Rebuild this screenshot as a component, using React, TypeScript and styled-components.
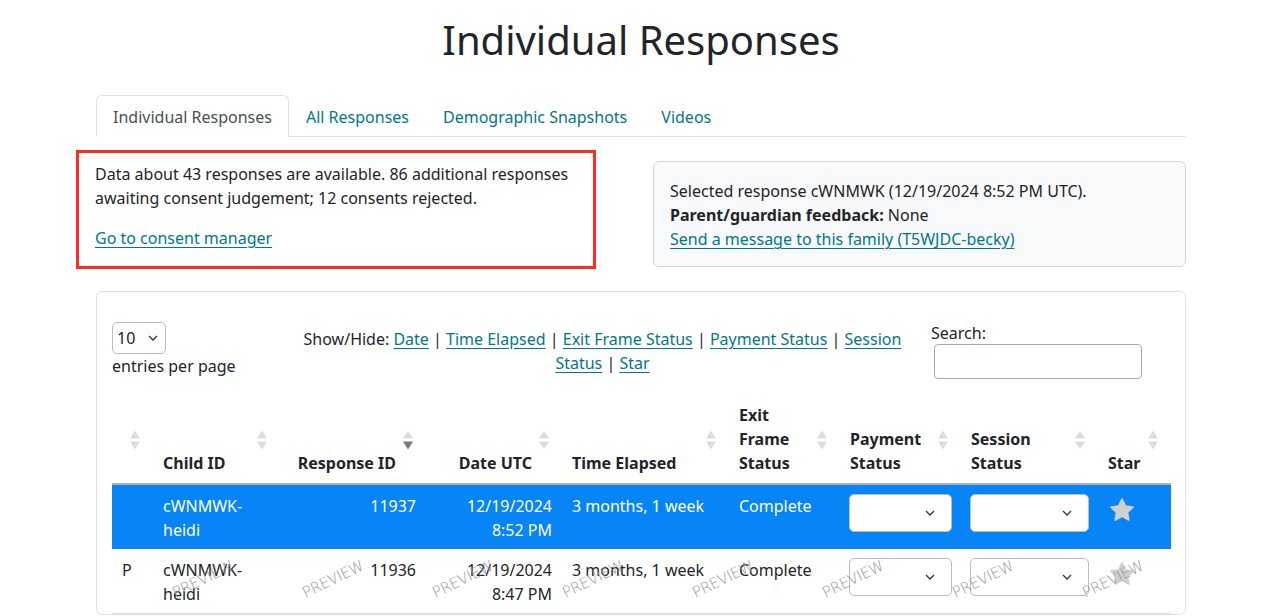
import React from "react";
import styled, { createGlobalStyle, css } from "styled-components";

const GlobalStyle = createGlobalStyle`
  html, body { margin: 0; padding: 0; background: #fff; }
  body {
    font-family: "Noto Sans", "Open Sans", sans-serif;
    font-size: 16px;
    line-height: 24px;
    color: #212529;
  }
  * { box-sizing: border-box; }
`;

const LINK = "#00788a";

const Page = styled.div`
  width: 1090px;
  margin-left: calc(50% - 547px);
`;

const Title = styled.h1`
  margin: 16px 0 31px;
  font-size: 40px;
  line-height: 48px;
  font-weight: 400;
  text-align: center;
`;

const TabBar = styled.nav`
  display: flex;
  border-bottom: 1px solid #dee2e6;
`;

const Tab = styled.a<{ $active?: boolean }>`
  display: block;
  padding: 9px 16px 7px 16px;
  margin-bottom: -1px;
  border: 1px solid transparent;
  border-top-left-radius: 6px;
  border-top-right-radius: 6px;
  color: ${(p) => (p.$active ? "#495057" : LINK)};
  text-decoration: none;
  cursor: pointer;
  ${(p) =>
    p.$active &&
    css`
      border-color: #dee2e6 #dee2e6 #fff;
      background: #fff;
    `}
`;

const InfoRow = styled.div`
  display: grid;
  grid-template-columns: 1fr 533px;
  align-items: start;
`;

const Highlight = styled.div`
  margin: 13px 0 0 -20px;
  width: 520px;
  border: 3px solid #fe2b1f;
  padding: 9px 16px 16px 16px;
`;

const Para = styled.p<{ $gap?: boolean }>`
  margin: 0 0 ${(p) => (p.$gap ? "16px" : "0")};
`;

const Link = styled.a`
  color: ${LINK};
  text-decoration: underline;
  text-underline-offset: 3px;
  cursor: pointer;
`;

const InfoCard = styled.div`
  margin-top: 24px;
  padding: 17px 16px 15px;
  background: #f8f9fa;
  border: 1px solid #d3d6d9;
  border-radius: 6px;
`;

const Line = styled.div``;

const Card = styled.div`
  margin-top: 22px;
  border: 1px solid #dee2e6;
  border-radius: 6px;
  padding: 29px 14px 0 15px;
`;

const Controls = styled.div`
  display: grid;
  grid-template-columns: 162px 637px 1fr;
  column-gap: 10px;
  align-items: start;
`;

const LengthCol = styled.div`
  display: flex;
  flex-direction: column;
  align-items: flex-start;
  padding-top: 1px;
`;

const SelectBox = styled.div<{ $w?: string; $h: number; $pad?: number }>`
  position: relative;
  width: ${(p) => p.$w ?? "100%"};
  height: ${(p) => p.$h}px;
  background: #fff;
  border: 1px solid #b9bcc0;
  border-radius: 5px;
  display: flex;
  align-items: center;
  padding-left: ${(p) => p.$pad ?? 8}px;
  color: #212529;
`;

const Chevron = styled.svg<{ $right: number }>`
  position: absolute;
  right: ${(p) => p.$right}px;
  top: 50%;
  transform: translateY(-50%);
`;

const ShowHide = styled.div`
  margin-top: 6px;
  text-align: center;
`;

const SearchCol = styled.div`
  display: flex;
  flex-direction: column;
`;

const SearchInput = styled.input`
  display: block;
  margin: -1px 0 0 3px;
  width: 208px;
  height: 35px;
  border: 1px solid #aaa;
  border-radius: 4px;
  font: inherit;
`;

const TableWrap = styled.div`
  margin-top: 16px;
`;

const Table = styled.table`
  width: 1059px;
  table-layout: fixed;
  border-collapse: collapse;
`;

const Th = styled.th<{ $num?: boolean }>`
  position: relative;
  padding: 8px ${(p) => (p.$num ? "30px" : "28px")} 8px 10px;
  text-align: ${(p) => (p.$num ? "right" : "left")};
  vertical-align: bottom;
  font-weight: 700;
  border-bottom: 2px solid #b0b0b0;
`;

const SortIcon = styled.svg`
  position: absolute;
  right: 13px;
  top: 50%;
  transform: translateY(-45%);
`;

const Tr = styled.tr<{ $selected?: boolean }>`
  ${(p) =>
    p.$selected
      ? css`
          background: #0784f6;
          color: #fff;
        `
      : css`
          background: #fff;
          border-bottom: 1px solid #dee2e6;
        `}
`;

const Td = styled.td<{ $num?: boolean; $tight?: boolean }>`
  position: relative;
  padding: 9px ${(p) => (p.$tight ? "9px" : "10px")} 7px;
  vertical-align: top;
  text-align: ${(p) => (p.$num ? "right" : "left")};
`;

const StarSvg = styled.svg`
  display: block;
  margin-top: 2px;
`;

const WatermarkLayer = styled.div`
  position: absolute;
  left: 58px;
  top: 22px;
  display: flex;
  gap: 64px;
  pointer-events: none;
  z-index: 2;
`;

const Watermark = styled.span`
  display: block;
  width: 66px;
  height: 16px;
  font-family: "DejaVu Sans", sans-serif;
  font-weight: 200;
  font-size: 15px;
  line-height: 16px;
  letter-spacing: -0.3px;
  color: #9a9a9a;
  white-space: nowrap;
  transform: rotate(-26deg);
  transform-origin: 50% 50%;
`;

const ChevronIcon = ({ right }: { right: number }) => (
  <Chevron $right={right} width="10" height="6" viewBox="0 0 10 6">
    <polyline points="1,1 5,5 9,1" fill="none" stroke="#333" strokeWidth="1.3" />
  </Chevron>
);

const Sort = ({ active }: { active?: boolean }) => (
  <SortIcon width="10" height="19" viewBox="0 0 10 19">
    <polygon points="5,0 10,8 0,8" fill="#dcdcdc" />
    <polygon points="0,11 10,11 5,19" fill={active ? "#7a7a7a" : "#dcdcdc"} />
  </SortIcon>
);

const Star = () => (
  <StarSvg width="28" height="28" viewBox="0 0 24 24">
    <path
      d="M12 2.8l2.85 5.9 6.45.85-4.72 4.5 1.2 6.45L12 17.35l-5.78 3.15 1.2-6.45-4.72-4.5 6.45-.85z"
      fill="#cfcfcf"
      stroke="#cfcfcf"
      strokeWidth="1.6"
      strokeLinejoin="round"
    />
  </StarSvg>
);

const columns: { label: string; width: number; num?: boolean; active?: boolean }[] = [
  { label: "", width: 41 },
  { label: "Child ID", width: 127 },
  { label: "Response ID", width: 146, num: true, active: true },
  { label: "Date UTC", width: 136, num: true },
  { label: "Time Elapsed", width: 167 },
  { label: "Exit Frame Status", width: 111 },
  { label: "Payment Status", width: 121 },
  { label: "Session Status", width: 137 },
  { label: "Star", width: 73 },
];

const rows = [
  { flag: "", id: "11937", date: "12/19/2024", time: "8:52 PM", selected: true },
  { flag: "P", id: "11936", date: "12/19/2024", time: "8:47 PM", selected: false },
];

export default function App() {
  return (
    <>
      <GlobalStyle />
      <Page>
        <Title>Individual Responses</Title>
        <TabBar>
          <Tab $active>Individual Responses</Tab>
          <Tab>All Responses</Tab>
          <Tab>Demographic Snapshots</Tab>
          <Tab>Videos</Tab>
        </TabBar>

        <InfoRow>
          <Highlight>
            <Para $gap>
              Data about 43 responses are available. 86 additional responses awaiting consent
              judgement; 12 consents rejected.
            </Para>
            <Para>
              <Link>Go to consent manager</Link>
            </Para>
          </Highlight>
          <InfoCard>
            <Line>Selected response cWNMWK (12/19/2024 8:52 PM UTC).</Line>
            <Line>
              <strong>Parent/guardian feedback:</strong> None
            </Line>
            <Line>
              <Link>Send a message to this family (T5WJDC-becky)</Link>
            </Line>
          </InfoCard>
        </InfoRow>

        <Card>
          <Controls>
            <LengthCol>
              <SelectBox $w="54px" $h={32} $pad={4}>
                10
                <ChevronIcon right={7} />
              </SelectBox>
              <span>entries per page</span>
            </LengthCol>
            <ShowHide>
              Show/Hide: <Link>Date</Link> | <Link>Time Elapsed</Link> |{" "}
              <Link>Exit Frame Status</Link> | <Link>Payment Status</Link> |{" "}
              <Link>Session Status</Link> | <Link>Star</Link>
            </ShowHide>
            <SearchCol>
              <span>Search:</span>
              <SearchInput type="text" />
            </SearchCol>
          </Controls>

          <TableWrap>
            <Table>
              <colgroup>
                {columns.map((c, i) => (
                  <col key={i} style={{ width: c.width }} />
                ))}
              </colgroup>
              <thead>
                <tr>
                  {columns.map((c, i) => (
                    <Th key={i} $num={c.num}>
                      {c.label}
                      <Sort active={c.active} />
                    </Th>
                  ))}
                </tr>
              </thead>
              <tbody>
                {rows.map((r) => (
                  <Tr key={r.id} $selected={r.selected}>
                    <Td>
                      {r.flag}
                      {!r.selected && (
                        <WatermarkLayer>
                          {Array.from({ length: 8 }).map((_, i) => (
                            <Watermark key={i}>PREVIEW</Watermark>
                          ))}
                        </WatermarkLayer>
                      )}
                    </Td>
                    <Td>
                      cWNMWK-
                      <br />
                      heidi
                    </Td>
                    <Td $num>{r.id}</Td>
                    <Td $num>
                      {r.date}
                      <br />
                      {r.time}
                    </Td>
                    <Td>3 months, 1 week</Td>
                    <Td>Complete</Td>
                    <Td $tight>
                      <SelectBox $h={38}>
                        <ChevronIcon right={16} />
                      </SelectBox>
                    </Td>
                    <Td $tight>
                      <SelectBox $h={38}>
                        <ChevronIcon right={16} />
                      </SelectBox>
                    </Td>
                    <Td>
                      <Star />
                    </Td>
                  </Tr>
                ))}
              </tbody>
            </Table>
          </TableWrap>
        </Card>
      </Page>
    </>
  );
}
